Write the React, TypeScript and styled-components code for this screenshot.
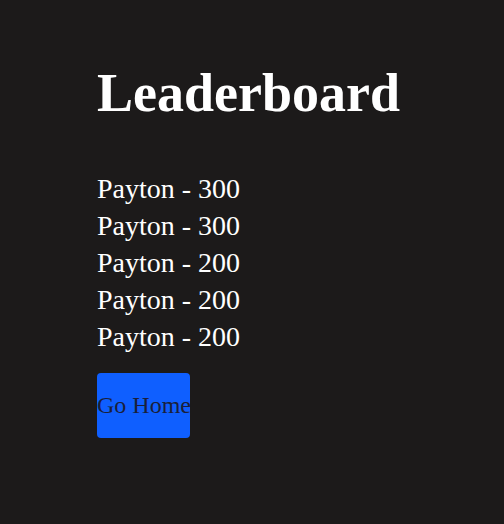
import React from "react";
import styled, { createGlobalStyle } from "styled-components";

const GlobalStyle = createGlobalStyle`
  html, body { margin: 0; padding: 0; background: #1c1a1a; }
  body { font-family: "Liberation Serif", "Times New Roman", serif; color: #ffffff; }
`;

const Page = styled.main`
  display: flex;
  flex-direction: column;
  align-items: flex-start;
  padding: 62px 0 0 97px;
`;

const Title = styled.h1`
  margin: 0 0 46px 0;
  font-size: 54px;
  font-weight: 700;
  line-height: 1.15;
`;

const List = styled.ul`
  list-style: none;
  margin: 0;
  padding: 0;
  display: flex;
  flex-direction: column;
`;

const Item = styled.li`
  font-size: 28px;
  line-height: 37px;
`;

const HomeButton = styled.button`
  margin-top: 18px;
  width: 93px;
  height: 65px;
  padding: 0;
  border: none;
  border-radius: 4px;
  background: #0f5fff;
  color: #1a1f3a;
  font-family: "Liberation Serif", "Times New Roman", serif;
  font-size: 24px;
  white-space: nowrap;
`;

const scores = [
  { name: "Payton", score: 300 },
  { name: "Payton", score: 300 },
  { name: "Payton", score: 200 },
  { name: "Payton", score: 200 },
  { name: "Payton", score: 200 },
];

export default function App() {
  return (
    <>
      <GlobalStyle />
      <Page>
        <Title>Leaderboard</Title>
        <List>
          {scores.map((s, i) => (
            <Item key={i}>
              {s.name} - {s.score}
            </Item>
          ))}
        </List>
        <HomeButton>Go Home</HomeButton>
      </Page>
    </>
  );
}
